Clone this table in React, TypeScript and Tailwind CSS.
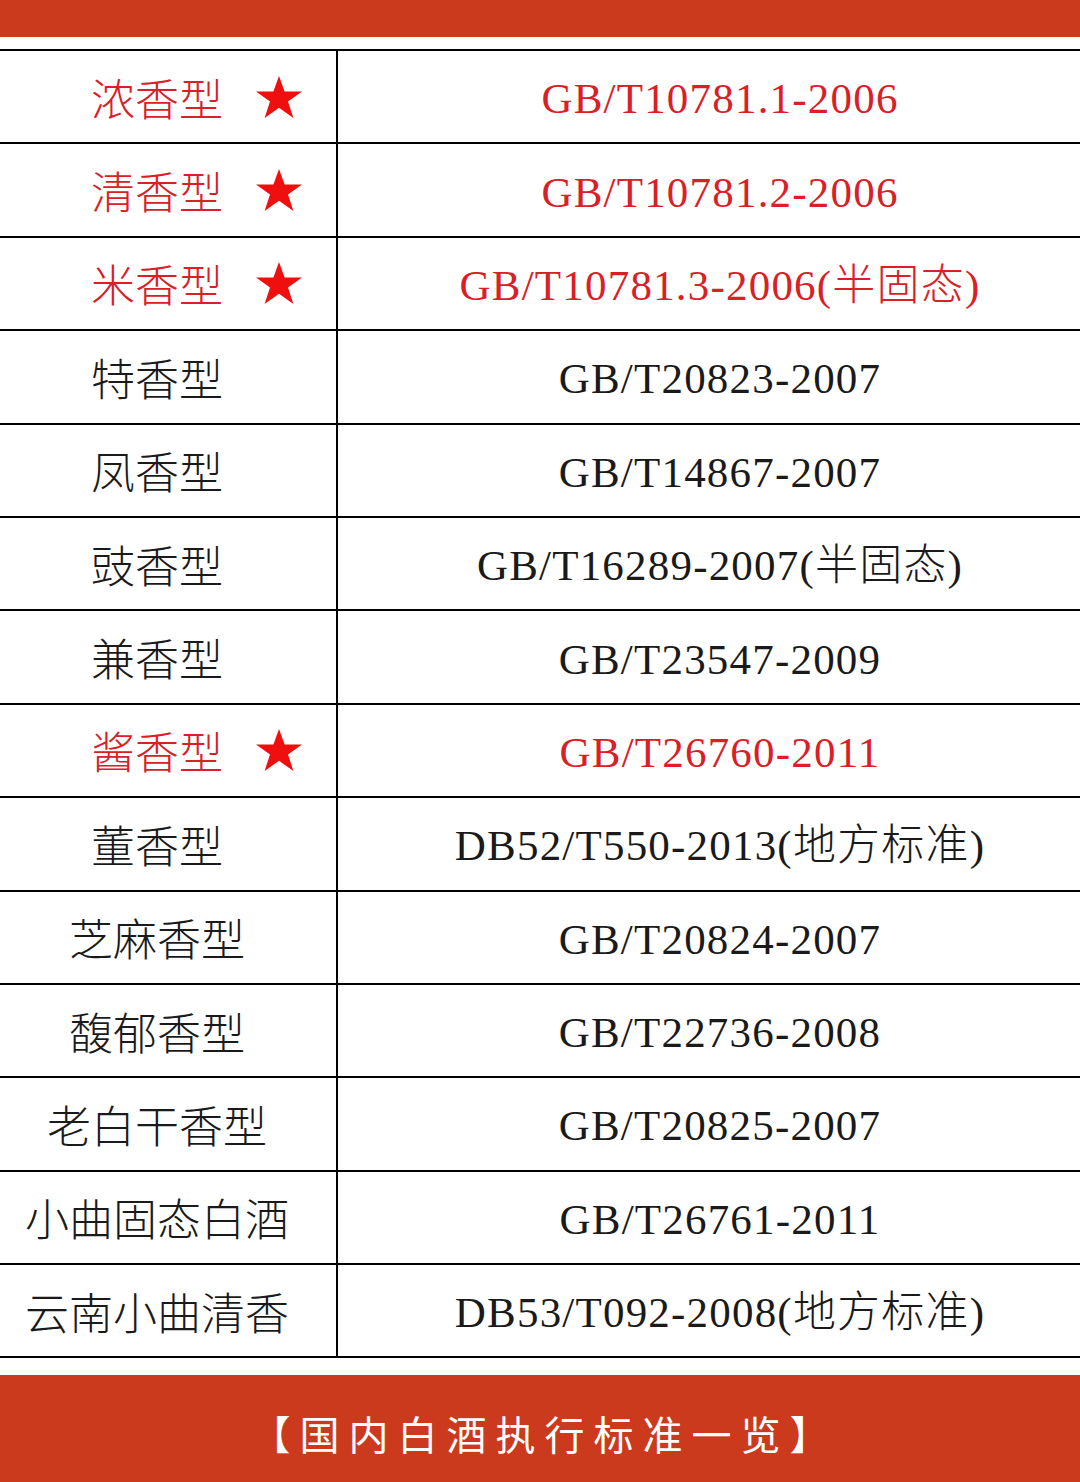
const rows = [
  { name: '浓香型', code: 'GB/T10781.1-2006', star: true },
  { name: '清香型', code: 'GB/T10781.2-2006', star: true },
  { name: '米香型', code: 'GB/T10781.3-2006(半固态)', star: true },
  { name: '特香型', code: 'GB/T20823-2007' },
  { name: '凤香型', code: 'GB/T14867-2007' },
  { name: '豉香型', code: 'GB/T16289-2007(半固态)' },
  { name: '兼香型', code: 'GB/T23547-2009' },
  { name: '酱香型', code: 'GB/T26760-2011', star: true },
  { name: '董香型', code: 'DB52/T550-2013(地方标准)' },
  { name: '芝麻香型', code: 'GB/T20824-2007' },
  { name: '馥郁香型', code: 'GB/T22736-2008' },
  { name: '老白干香型', code: 'GB/T20825-2007' },
  { name: '小曲固态白酒', code: 'GB/T26761-2011' },
  { name: '云南小曲清香', code: 'DB53/T092-2008(地方标准)' },
];

function Star() {
  return (
    <svg width="48" height="42" viewBox="0 0 48 42" className="absolute left-full top-1/2 -translate-y-1/2 ml-[32px]">
      <polygon
        points="24,0 29.6,15.6 47,15.6 33,25.4 38.4,42 24,31.8 9.6,42 15,25.4 1,15.6 18.4,15.6"
        fill="#ef0f0f"
      />
    </svg>
  );
}

export default function App() {
  return (
    <div className="w-[1080px] h-[1482px] bg-white flex flex-col overflow-hidden font-light" style={{ fontFamily: '"Liberation Serif", "Noto Sans CJK SC", serif' }}>
      <div className="h-[37px] bg-[#cc3a1e] shrink-0" />
      <div className="h-[12px] shrink-0" />

      {/* 表格 */}
      <div className="border-t-2 border-black">
        {rows.map((r) => (
          <div key={r.name} className="flex h-[93.4px] border-b-2 border-black">
            <div className="w-[338px] shrink-0 border-r-2 border-black flex items-center justify-center pr-[22px]">
              <span
                className={`relative text-[44px] leading-none ${r.star ? 'text-[#d92027]' : 'text-[#1a1a1a]'}`}
                style={{ fontFamily: '"Noto Sans CJK SC", sans-serif' }}
              >
                {r.name}
                {r.star && <Star />}
              </span>
            </div>
            <div className="flex-1 flex items-center justify-center pl-[22px] pt-[4px]">
              <span className={`text-[43px] leading-none tracking-[1.2px] ${r.star ? 'text-[#d92027]' : 'text-[#1a1a1a]'}`}>
                {r.code}
              </span>
            </div>
          </div>
        ))}
      </div>

      <div className="h-[17px] shrink-0" />
      <div className="flex-1 bg-[#cc3a1e] flex items-center justify-center pt-[8px]">
        <span
          className="text-white text-[40px] leading-none tracking-[9px] pl-[9px] font-normal"
          style={{ fontFamily: '"Noto Sans CJK SC", sans-serif' }}
        >
          【国内白酒执行标准一览】
        </span>
      </div>
    </div>
  );
}
